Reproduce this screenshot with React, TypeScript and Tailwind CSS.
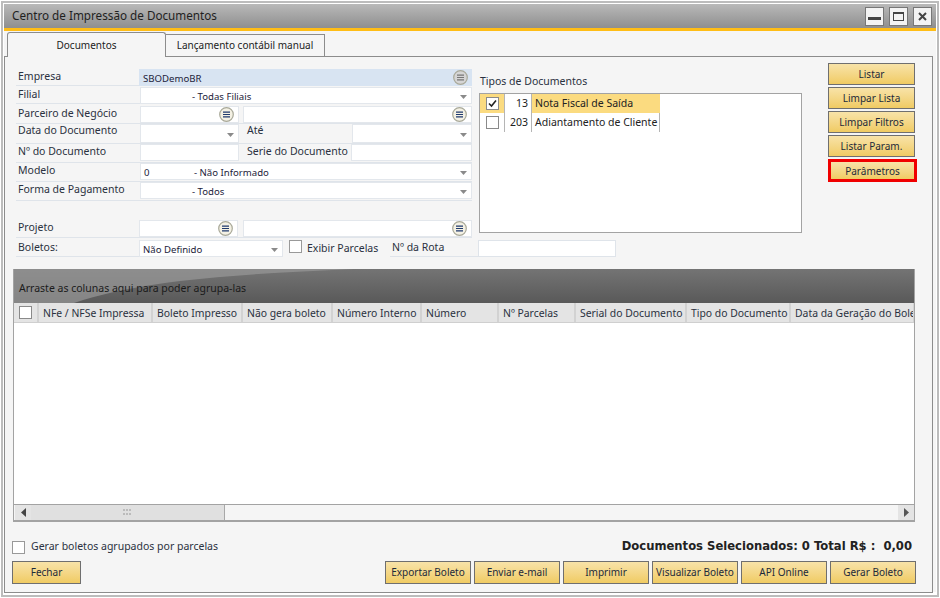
import React from 'react';

const COLUMNS = [
  { label: 'NFe / NFSe Impressa', w: 'w-[114px]' },
  { label: 'Boleto Impresso', w: 'w-[90px]' },
  { label: 'Não gera boleto', w: 'w-[90px]' },
  { label: 'Número Interno', w: 'w-[89px]' },
  { label: 'Número', w: 'w-[77px]' },
  { label: 'Nº Parcelas', w: 'w-[77px]' },
  { label: 'Serial do Documento', w: 'w-[111px]' },
  { label: 'Tipo do Documento', w: 'w-[104px]' },
  { label: 'Data da Geração do Boleto', w: 'w-[124px]' },
];

const SIDE_BUTTONS = ['Listar', 'Limpar Lista', 'Limpar Filtros', 'Listar Param.'];

const Caret = () => (
  <svg width="7" height="4" viewBox="0 0 7 4" className="mt-[3px] shrink-0">
    <path d="M0 0h7L3.500 4z" fill="#8a8a8a" />
  </svg>
);

const MenuIcon = ({ muted }: { muted?: boolean }) => (
  <svg width="15" height="15" viewBox="0 0 15 15" className="shrink-0">
    <circle cx="7.500" cy="7.500" r="6.800" fill={muted ? '#d5d5d5' : '#f4f1e4'} stroke="#a8a898" strokeWidth="1.200" />
    <path d="M4 5.200h7M4 7.500h7M4 9.800h7" stroke={muted ? '#777' : '#1f3a6e'} strokeWidth="1.200" />
  </svg>
);

const Check = ({ checked, className }: { checked?: boolean; className?: string }) => (
  <span className={`flex h-[13px] w-[13px] shrink-0 items-center justify-center border border-[#8a8a8a] bg-white ${className ?? ''}`}>
    {checked && (
      <svg width="9" height="9" viewBox="0 0 9 9">
        <path d="M1 4.500l2.500 2.500L8 1.500" fill="none" stroke="#222" strokeWidth="1.600" />
      </svg>
    )}
  </span>
);

const Btn = ({ children, className, h = 'h-[23px]' }: { children: React.ReactNode; className?: string; h?: string }) => (
  <button className={`flex items-center justify-center whitespace-nowrap border border-[#6f6f6f] bg-gradient-to-b from-[#f8e3a8] to-[#f0cb62] text-[10px] text-[#1d2a3a] ${h} ${className ?? ''}`}>
    {children}
  </button>
);

const Field = ({ w, h = 'h-[17px]', text, children, className }: {
  w: string; h?: string; text?: React.ReactNode; children?: React.ReactNode; className?: string;
}) => (
  <div className={`flex shrink-0 items-center justify-between border border-[#e3e7ec] bg-white pl-[3px] pr-[4px] ${w} ${h} ${className ?? ''}`}>
    <span className="whitespace-nowrap pt-[3px] text-[9.6px] text-[#1c1c3a]">{text}</span>
    {children}
  </div>
);

const Row = ({ label, h, className, labelClass = 'leading-[14px]', children }: {
  label: string; h: string; className?: string; labelClass?: string; children: React.ReactNode;
}) => (
  <div className={`flex items-start border-b border-[#dfe4ea] pl-[2px] ${h} ${className ?? ''}`}>
    <span className={`w-[122px] shrink-0 whitespace-nowrap ${labelClass}`}>{label}</span>
    {children}
  </div>
);

const App: React.FC = () => {
  return (
    <div className="h-[598px] w-[940px] overflow-hidden bg-white p-[1px] font-['Noto_Sans',sans-serif] text-[10.5px] text-[#2a3140]">
      <div className="h-[596px] border-2 border-[#bcbcbc] p-[1px]">
        <div className="flex h-[24px] items-center justify-between bg-gradient-to-b from-[#b9b9b9] to-[#8f8f8f] pl-[8px] pr-[4px]">
          <span className="text-[11.7px] text-[#1f1f1f]">Centro de Impressão de Documentos</span>
          <div className="flex gap-[5px]">
            <div className="flex h-[19px] w-[19px] items-end justify-center border border-[#777] bg-[#f3f3f3] pb-[5px]">
              <span className="block h-[3px] w-[13px] bg-[#444]" />
            </div>
            <div className="flex h-[19px] w-[19px] items-center justify-center border border-[#777] bg-[#f3f3f3]">
              <span className="block h-[9px] w-[11px] border border-t-2 border-[#444]" />
            </div>
            <div className="flex h-[19px] w-[19px] items-center justify-center border border-[#777] bg-[#f3f3f3]">
              <svg width="9" height="9" viewBox="0 0 9 9">
                <path d="M1 1l7 7M8 1l-7 7" stroke="#444" strokeWidth="2" />
              </svg>
            </div>
          </div>
        </div>
        <div className="h-[3px] bg-[#ffbd16]" />

        <div className="h-[561px] bg-[#f5f5f5] pr-[3px] pt-[1px]">
          {/* Tabs */}
          <div className="relative z-10 flex h-[25px] pl-[3px] text-[10px]">
            <div className="flex h-[25px] w-[159px] items-center justify-center rounded-t-[3px] border border-b-0 border-[#8c8c8c] bg-[#f5f5f5] text-[#1c1c1c]">
              Documentos
            </div>
            <div className="mt-[2px] flex h-[22px] w-[159px] items-center justify-center border border-b-0 border-l-0 border-[#8c8c8c] bg-[#f5f5f5] text-[#1c1c1c]">
              Lançamento contábil manual
            </div>
          </div>

          <div className="-mt-px h-[537px] border border-[#8c8c8c] pl-[11px] pt-[6px]">
            <div className="flex h-[206px]">
              {/* Form */}
              <div className="w-[456px] pt-[5px]">
                <Row label="Empresa" h="h-[18px]" className="pt-[1px]">
                  <div className="flex h-[17px] w-[333px] shrink-0 -translate-x-[1px] items-center justify-between bg-[#d8e4f2] pl-[4px] pr-[4px]">
                    <span className="pt-[3px] text-[9.6px] text-[#1c1c3a]">SBODemoBR</span>
                    <MenuIcon muted />
                  </div>
                </Row>
                <Row label="Filial" h="h-[18px]" className="pt-[1px]">
                  <Field w="w-[332px]" text={<><span className="inline-block w-[48px]" />- Todas Filiais</>}><Caret /></Field>
                </Row>
                <Row label="Parceiro de Negócio" h="h-[19px]" className="mt-[1px] pt-[1px]">
                  <Field w="w-[99px]"><MenuIcon /></Field>
                  <Field w="w-[229px]" className="ml-[4px]"><MenuIcon /></Field>
                </Row>
                <Row label="Data do Documento" h="h-[20px]" labelClass="leading-[12px]">
                  <Field w="w-[99px]" h="h-[19px]"><Caret /></Field>
                  <span className="ml-[8px] w-[105px] leading-[12px]">Até</span>
                  <Field w="w-[120px]" h="h-[19px]"><Caret /></Field>
                </Row>
                <Row label="Nº do Documento" h="h-[19px]">
                  <Field w="w-[99px]" />
                  <span className="ml-[8px] w-[105px] whitespace-nowrap leading-[14px]">Serie do Documento</span>
                  <Field w="w-[121px]" />
                </Row>
                <Row label="Modelo" h="h-[19px]">
                  <Field w="w-[332px]" text={<><span className="inline-block w-[50px]">0</span>- Não Informado</>}><Caret /></Field>
                </Row>
                <Row label="Forma de Pagamento" h="h-[19px]">
                  <Field w="w-[332px]" text={<><span className="inline-block w-[48px]" />- Todos</>}><Caret /></Field>
                </Row>
                <Row label="Projeto" h="h-[18px]" className="mt-[19px]">
                  <Field w="w-[99px]" className="-translate-x-[1px]"><MenuIcon /></Field>
                  <Field w="w-[229px]" className="ml-[4px]"><MenuIcon /></Field>
                </Row>
                <div className="mt-[2px] flex h-[17px] items-start">
                  <span className="h-[17px] w-[123px] shrink-0 border-b border-[#dfe4ea] pl-[2px] leading-[14px]">Boletos:</span>
                  <Field w="w-[144px]" text="Não Definido"><Caret /></Field>
                  <Check className="ml-[6px] border-[#999]" />
                  <span className="ml-[5px] w-[73px] shrink-0 whitespace-nowrap leading-[17px]">Exibir Parcelas</span>
                  <span className="ml-[10px] h-[17px] w-[88px] shrink-0 whitespace-nowrap border-b border-[#dfe4ea] pl-[2px] leading-[14px]">Nº da Rota</span>
                </div>
              </div>

              {/* Tipos de Documentos */}
              <div className="ml-[7px] w-[324px] pt-[10px]">
                <div className="pl-[1px] leading-[16px]">Tipos de Documentos</div>
                <div className="mt-[4px] h-[140px] w-[323px] border border-[#a3a3a3] bg-white">
                  <div className="flex h-[19px]">
                    <div className="flex w-[25px] items-center justify-center border-r border-[#b5b5b5] bg-[#fbdb80]"><Check checked /></div>
                    <div className="w-[27px] border-r border-[#b5b5b5] pr-[3px] text-right leading-[19px] text-[#222]">13</div>
                    <div className="w-[128px] whitespace-nowrap bg-[#fbdb80] pl-[3px] leading-[19px] text-[#222]">Nota Fiscal de Saída</div>
                  </div>
                  <div className="flex h-[19px]">
                    <div className="flex w-[25px] items-center justify-center border-r border-[#b5b5b5]"><Check /></div>
                    <div className="w-[27px] border-r border-[#b5b5b5] pr-[3px] text-right leading-[19px] text-[#222]">203</div>
                    <div className="w-[128px] whitespace-nowrap border-r border-[#b5b5b5] pl-[3px] leading-[19px] text-[#222]">Adiantamento de Cliente</div>
                  </div>
                </div>
                <div className="-ml-px mt-[7px] h-[17px] w-[138px] border border-[#dfe4ea] bg-white" />
              </div>

              {/* Side buttons */}
              <div className="ml-[25px] flex w-[90px] flex-col gap-[2px]">
                {SIDE_BUTTONS.map((b) => (
                  <Btn key={b} h="h-[22px]" className="w-[87px]">{b}</Btn>
                ))}
                <Btn className="w-[89px] border-[3px] border-[#f00000] pt-[1px]">Parâmetros</Btn>
              </div>
            </div>

            {/* Grid */}
            <div className="-ml-[3px] flex h-[253px] w-[902px] flex-col border-b-2 border-l border-r border-[#a3a3a3]">
              <div className="relative flex h-[34px] shrink-0 items-end overflow-hidden bg-gradient-to-b from-[#747474] to-[#595959] pb-[6px] pl-[5px] text-[#1b1b1b]">
                <svg className="absolute left-0 top-0" width="420" height="34" viewBox="0 0 420 34">
                  <path d="M0 0H340C230 5 130 10 60 34H0z" fill="#989898" fillOpacity="0.7" />
                </svg>
                <span className="relative">Arraste as colunas aqui para poder agrupa-las</span>
              </div>
              <div className="flex h-[20px] shrink-0 overflow-hidden border-b border-[#cfcfcf] bg-[#e4e4e4] text-[10.4px]">
                <div className="flex w-[25px] shrink-0 items-center justify-center border-r-2 border-[#d2d2d2]"><Check /></div>
                {COLUMNS.map((c) => (
                  <div key={c.label} className={`shrink-0 overflow-hidden whitespace-nowrap border-r-2 border-[#d2d2d2] pl-[4px] leading-[20px] text-[#2a3140] ${c.w}`}>
                    {c.label}
                  </div>
                ))}
              </div>
              <div className="flex-1 bg-white" />
              <div className="flex h-[16px] shrink-0 items-stretch border-t border-[#a3a3a3] bg-[#f5f5f5] pl-[1px]">
                <div className="flex w-[16px] items-center justify-center bg-[#e4e4e4]">
                  <svg width="5" height="9" viewBox="0 0 5 9"><path d="M5 0v9L0 4.500z" fill="#444" /></svg>
                </div>
                <div className="flex w-[194px] items-center justify-center border-r border-[#a8a8a8] bg-[#e0e0e0]">
                  <svg width="9" height="7" viewBox="0 0 9 7" fill="#bbb">
                    <path d="M0 0h2v2H0zM3 0h2v2H3zM6 0h2v2H6zM0 4h2v2H0zM3 4h2v2H3zM6 4h2v2H6z" />
                  </svg>
                </div>
                <div className="flex-1" />
                <div className="flex w-[16px] items-center justify-center bg-[#e4e4e4]">
                  <svg width="5" height="9" viewBox="0 0 5 9"><path d="M0 0v9l5-4.500z" fill="#555" /></svg>
                </div>
              </div>
            </div>

            {/* Footer */}
            <div className="-ml-[4px] mt-[15px] flex h-[20px] w-[901px] items-center justify-between">
              <label className="flex items-center gap-[6px]">
                <Check className="border-[#999]" />
                <span>Gerar boletos agrupados por parcelas</span>
              </label>
              <span className="whitespace-pre pr-[1px] font-['DejaVu_Sans',sans-serif] text-[11.6px] font-bold text-[#222]">Documentos Selecionados: 0 Total R$ :  0,00</span>
            </div>
            <div className="-ml-[4px] mt-[4px] flex">
              <Btn className="w-[69px]">Fechar</Btn>
              <div className="ml-auto mr-[16px] flex gap-[3px]">
                <Btn className="w-[86px]">Exportar Boleto</Btn>
                <Btn className="w-[86px]">Enviar e-mail</Btn>
                <Btn className="w-[86px]">Imprimir</Btn>
                <Btn className="w-[86px]">Visualizar Boleto</Btn>
                <Btn className="w-[86px]">API Online</Btn>
                <Btn className="w-[86px]">Gerar Boleto</Btn>
              </div>
            </div>
          </div>
        </div>
      </div>
    </div>
  );
};

export default App;
